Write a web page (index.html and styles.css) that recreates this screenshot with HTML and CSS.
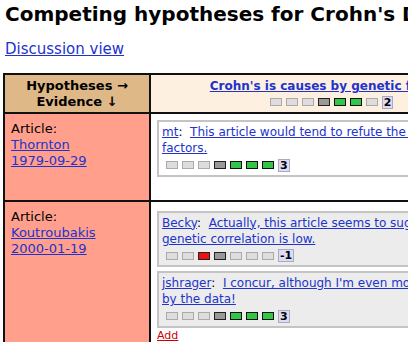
FILE: index.html
```html
<!DOCTYPE html>
<html lang="en">
<head>
  <meta charset="UTF-8">
  <meta name="viewport" content="width=device-width, initial-scale=1.0">
  <title>Competing hypotheses</title>
  <link rel="stylesheet" href="styles.css">
</head>
<body>
  <h1 class="title">Competing hypotheses for Crohn's Disease</h1>
  <p class="views"><a href="#">Discussion view</a></p>

  <table class="matrix">
    <tr>
      <th class="corner">Hypotheses &rarr;<br>Evidence &darr;</th>
      <th class="hyp">
        <a href="#">Crohn's is causes by genetic factors</a>
        <div class="rating">
          <span class="sq"></span><span class="sq"></span><span class="sq"></span><span class="sq neutral"></span><span class="sq up"></span><span class="sq up"></span><span class="sq"></span><span class="score">2</span>
        </div>
      </th>
    </tr>
    <tr>
      <td class="evidence">Article:<br><a href="#">Thornton<br>1979-09-29</a></td>
      <td class="cell first">
        <div class="comment mine">
          <a href="#">mt</a>:&nbsp; <a href="#">This article would tend to refute the genetic risk factors.</a>
          <div class="rating">
            <span class="sq"></span><span class="sq"></span><span class="sq"></span><span class="sq neutral"></span><span class="sq up"></span><span class="sq up"></span><span class="sq up"></span><span class="score">3</span>
          </div>
        </div>
      </td>
    </tr>
    <tr>
      <td class="evidence">Article:<br><a href="#">Koutroubakis<br>2000-01-19</a></td>
      <td class="cell">
        <div class="comment">
          <a href="#">Becky</a>:&nbsp; <a href="#">Actually, this article seems to suggest that the genetic correlation is low.</a>
          <div class="rating">
            <span class="sq"></span><span class="sq"></span><span class="sq down"></span><span class="sq neutral"></span><span class="sq"></span><span class="sq"></span><span class="sq"></span><span class="score">-1</span>
          </div>
        </div>
        <div class="comment">
          <a href="#">jshrager</a>:&nbsp; <a href="#">I concur, although I'm even more concerned by the data!</a>
          <div class="rating">
            <span class="sq"></span><span class="sq"></span><span class="sq"></span><span class="sq neutral"></span><span class="sq up"></span><span class="sq up"></span><span class="sq up"></span><span class="score">3</span>
          </div>
        </div>
        <a class="add" href="#">Add</a>
      </td>
    </tr>
  </table>
</body>
</html>
```

FILE: styles.css
```css
body {
  font-family: "DejaVu Sans", Verdana, sans-serif;
  font-size: 13px;
  line-height: 16px;
  margin: 0;
  padding: 2px 3px;
  color: #000;
  background: #fff;
  overflow-x: hidden;
}
a {
  color: #2233cc;
}
.title {
  font-size: 20px;
  line-height: 24px;
  margin: 0 0 0 2px;
  white-space: nowrap;
}
.views {
  font-size: 15px;
  line-height: 18px;
  margin: 14px 0 15px 2px;
}
.matrix {
  border-collapse: collapse;
  table-layout: fixed;
  width: 511px;
}
.matrix th, .matrix td {
  border: 2px solid #111;
  vertical-align: top;
}
.corner {
  background: #deb887;
  width: 136px;
  padding: 3px 4px 2px;
  text-align: center;
}
.hyp {
  background: #fdf0e0;
  text-align: center;
  padding: 3px 4px 2px;
}
.hyp > a {
  font-size: 12px;
}
.evidence {
  background: #ff9f8c;
  padding: 7px 6px;
}
.cell {
  padding: 9px 6px 20px;
  background: #fff;
}
.cell.first {
  padding: 6px 6px 19px;
}
.comment {
  border: 2px solid #c4c4c4;
  background: #ececec;
  padding: 2px 3px 3px;
  margin-bottom: 4px;
  font-size: 12px;
  line-height: 16px;
}
.comment.mine {
  background: #fff;
}
.rating {
  font-size: 11px;
  line-height: 13px;
  margin-top: 1px;
}
.comment .rating {
  padding-left: 4px;
  margin-top: 2px;
}
.sq {
  display: inline-block;
  width: 10px;
  height: 6px;
  border: 1px solid #aaa;
  background: #ddd;
  margin-right: 4px;
  vertical-align: middle;
}
.sq.neutral {
  background: #999;
  border-color: #222;
}
.sq.up {
  background: #33c44a;
  border-color: #111;
}
.sq.down {
  background: #ee1111;
  border-color: #222;
}
.score {
  display: inline-block;
  background: #dcdcf8;
  border: 1px solid #aab;
  font-weight: bold;
  line-height: 11px;
  padding: 0 1px;
  vertical-align: middle;
}
.add {
  display: block;
  color: #cc0000;
  font-size: 11px;
  line-height: 13px;
  margin-top: -3px;
}
```
